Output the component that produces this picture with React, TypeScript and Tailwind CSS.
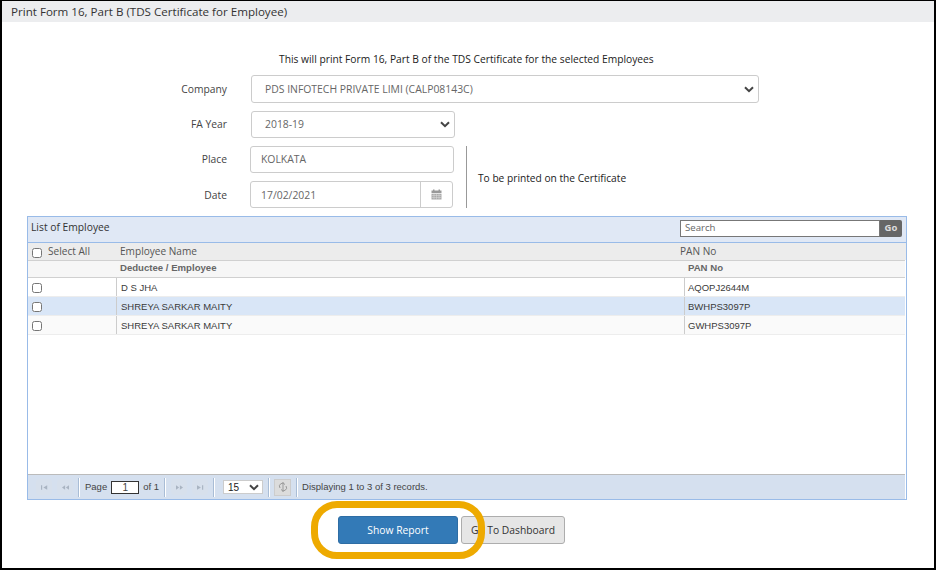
import React from 'react';

const rows = [
  { name: 'D S JHA', pan: 'AQOPJ2644M', bg: 'bg-white' },
  { name: 'SHREYA SARKAR MAITY', pan: 'BWHPS3097P', bg: 'bg-[#d9e6f7]' },
  { name: 'SHREYA SARKAR MAITY', pan: 'GWHPS3097P', bg: 'bg-[#fafafa]' },
];

function Chevron() {
  return (
    <svg width="10" height="7" viewBox="0 0 10 7" className="shrink-0">
      <path d="M1 1.2 L5 5.2 L9 1.2" fill="none" stroke="#444" strokeWidth="2" />
    </svg>
  );
}

function Sep({ className = '' }: { className?: string }) {
  return <div className={`w-px h-[19px] bg-[#a9bdd6] border-r border-white box-content ${className}`} />;
}

function PagerBtn({ d, className = '' }: { d: string; className?: string }) {
  return (
    <div className={`w-[16px] h-[16px] bg-[#d7e0ec] flex items-center justify-center rounded-sm ${className}`}>
      <svg width="7" height="5" viewBox="0 0 9 6">
        <path d={d} fill="#a9b4c2" />
      </svg>
    </div>
  );
}

function Label({ children, className = 'pt-px' }: { children: React.ReactNode; className?: string }) {
  return <div className={`w-[225px] text-right text-[10.3px] text-[#444] ${className}`}>{children}</div>;
}

export default function App() {
  return (
    <div className="w-[936px] h-[570px] bg-black pt-px pl-[2px] pr-[2px] pb-[2px] font-['Open_Sans','Noto_Sans',sans-serif] overflow-hidden">
      <div className="relative h-full bg-white flex flex-col">
        <div className="h-[21px] bg-[#ecedef] pl-[9px] flex items-center text-[11.6px] text-[#333] shrink-0">
          Print Form 16, Part B (TDS Certificate for Employee)
        </div>

        <div className="h-[17px] mt-[29px] pl-[277px] flex items-center text-[10.25px] text-[#222] shrink-0">
          This will print Form 16, Part B of the TDS Certificate for the selected Employees
        </div>

        <div className="flex items-center mt-[7px] h-[28px] shrink-0">
          <Label>Company</Label>
          <div className="ml-[24px] w-[508px] h-[28px] border border-[#ccc] rounded-[3px] pl-[13px] pr-[4px] flex items-center justify-between text-[10.4px] text-[#666] shrink-0">
            <span className="pt-px">PDS INFOTECH PRIVATE LIMI (CALP08143C)</span>
            <Chevron />
          </div>
        </div>

        <div className="flex items-center mt-[8px] h-[27px] shrink-0">
          <Label>FA Year</Label>
          <div className="ml-[24px] w-[204px] h-[27px] border border-[#ccc] rounded-[3px] pl-[13px] pr-[4px] flex items-center justify-between text-[10.4px] text-[#666] shrink-0">
            <span>2018-19</span>
            <Chevron />
          </div>
        </div>

        <div className="flex mt-[8px] h-[62px] shrink-0">
          <div className="flex flex-col gap-[8px]">
            <div className="flex items-center h-[27px]">
              <Label>Place</Label>
              <div className="ml-[23px] w-[204px] h-[27px] border border-[#ccc] rounded-[3px] pl-[10px] flex items-center text-[10.4px] text-[#666]">
                KOLKATA
              </div>
            </div>
            <div className="flex items-center h-[27px]">
              <Label className="pt-[3px]">Date</Label>
              <div className="ml-[23px] w-[203px] h-[27px] border border-[#ccc] rounded-[3px] pl-[10px] flex items-center justify-between text-[10.4px] text-[#666]">
                <span className="pt-[3px]">17/02/2021</span>
                <div className="w-[32px] h-full border-l border-[#ccc] flex items-center justify-center">
                  <svg width="11" height="11" viewBox="0 0 11 11">
                    <rect x="0.5" y="1.5" width="10" height="2.5" fill="#999" />
                    <rect x="2" y="0.5" width="1.5" height="2" fill="#999" />
                    <rect x="7.5" y="0.5" width="1.5" height="2" fill="#999" />
                    <rect x="0.5" y="4.7" width="10" height="5.8" fill="#aaa" />
                    <path d="M0.5 6.5H10.5M0.5 8.5H10.5M3 4.7V10.5M5.5 4.7V10.5M8 4.7V10.5" stroke="#ddd" strokeWidth="0.5" />
                  </svg>
                </div>
              </div>
            </div>
          </div>
          <div className="ml-[12px] w-px h-[62px] bg-[#999]" />
          <div className="ml-[11px] pt-[3px] flex items-center text-[10.2px] text-[#222]">
            To be printed on the Certificate
          </div>
        </div>

        <div className="ml-[25px] mt-[8px] w-[880px] h-[284px] border border-[#99bbe8] flex flex-col shrink-0">
          <div className="h-[26px] bg-[#e0e8f5] border-b border-[#99bbe8] flex items-center justify-between pl-[3px] pr-[4px] pb-[3px] shrink-0">
            <span className="text-[10.3px] text-[#333]">List of Employee</span>
            <div className="flex items-center h-[17px]">
              <div className="w-[200px] h-[17px] border border-[#777] bg-white pl-[4px] flex items-center text-[9.6px] text-[#666]">
                Search
              </div>
              <div className="w-[22px] h-[17px] bg-[#666] rounded-r-[2px] flex items-center justify-center text-[9.5px] font-bold text-[#ddd]">
                Go
              </div>
            </div>
          </div>

          <div className="h-[17px] bg-[#ececec] flex items-center text-[10.1px] text-[#555] shrink-0">
            <input type="checkbox" readOnly className="ml-[4px] w-[10px] h-[10px] mt-[3px] shrink-0" />
            <span className="ml-[6px] w-[72px]">Select All</span>
            <span className="w-[560px]">Employee Name</span>
            <span>PAN No</span>
          </div>
          <div className="h-[18px] mr-px pb-[2px] bg-[#f6f6f6] border-y border-[#d0d0d0] flex items-center text-[9.6px] font-bold text-[#666] font-['Liberation_Sans',sans-serif] shrink-0">
            <span className="ml-[92px] w-[568px]">Deductee / Employee</span>
            <span>PAN No</span>
          </div>

          <div className="flex-1 bg-white">
            {rows.map((r, i) => (
              <div key={i} className={`h-[19px] ${r.bg} border-b border-[#ededed] mr-px flex items-center text-[9.5px] text-[#3a3a3a] font-['Liberation_Sans',sans-serif]`}>
                <div className="w-[89px] h-full flex items-center border-r border-[#ccc] shrink-0">
                  <input type="checkbox" readOnly className="ml-[4px] w-[10px] h-[10px] mt-px" />
                </div>
                <div className="w-[568px] pl-[4px] pt-[2px] h-full flex items-center border-r border-[#ccc] shrink-0">{r.name}</div>
                <div className="pl-[3px] pt-[2px]">{r.pan}</div>
              </div>
            ))}
          </div>

          <div className="h-[25px] mr-px bg-[#d5e0ef] border-t border-[#bbb] flex items-center text-[9.5px] text-[#444] font-['Liberation_Sans',sans-serif] shrink-0">
            <PagerBtn className="ml-[8px]" d="M0 0H1.5V6H0ZM8 0V6L3 3Z" />
            <PagerBtn className="ml-[5px]" d="M4 0V6L0 3ZM9 0V6L5 3Z" />
            <Sep className="ml-[5px]" />
            <span className="ml-[5px]">Page</span>
            <div className="ml-[4px] w-[28px] h-[13px] bg-white border border-[#333] flex items-center justify-center text-[10px]">1</div>
            <span className="ml-[4px]">of 1</span>
            <Sep className="ml-[5px]" />
            <PagerBtn className="ml-[5px]" d="M0 0V6L4 3ZM5 0V6L9 3Z" />
            <PagerBtn className="ml-[5px]" d="M0 0V6L5 3ZM6.5 0H8V6H6.5Z" />
            <Sep className="ml-[5px]" />
            <div className="ml-[8px] w-[40px] h-[14px] bg-white border border-[#ccc] pl-[4px] pr-[3px] flex items-center justify-between text-[10px] text-[#222]">
              <span>15</span>
              <Chevron />
            </div>
            <Sep className="ml-[5px]" />
            <div className="ml-[4px] w-[17px] h-[17px] bg-[#dcdcdc] border border-[#ccc] flex items-center justify-center">
              <svg width="10" height="10" viewBox="0 0 10 10">
                <path d="M2 6A3 3 0 0 1 7 2.5M8 4A3 3 0 0 1 3 7.5M5 0V10" fill="none" stroke="#999" strokeWidth="1" />
              </svg>
            </div>
            <Sep className="ml-[5px]" />
            <span className="ml-[4px]">Displaying 1 to 3 of 3 records.</span>
          </div>
        </div>

        <div className="flex mt-[16px] ml-[336px] gap-[3px] text-[10.3px] shrink-0">
          <div className="w-[120px] h-[28px] pt-px bg-[#337ab7] border border-[#2e6da4] rounded-[3px] text-white flex items-center justify-center">
            Show Report
          </div>
          <div className="w-[104px] h-[28px] pt-px bg-[#e6e6e6] border border-[#adadad] rounded-[3px] text-[#333] flex items-center justify-center">
            Go To Dashboard
          </div>
        </div>

        {/* highlight drawn over the buttons */}
        <div className="absolute left-[309px] top-[500px] w-[174px] h-[58px] border-[7px] border-[#eeaa00] rounded-[26px]" />
      </div>
    </div>
  );
}
